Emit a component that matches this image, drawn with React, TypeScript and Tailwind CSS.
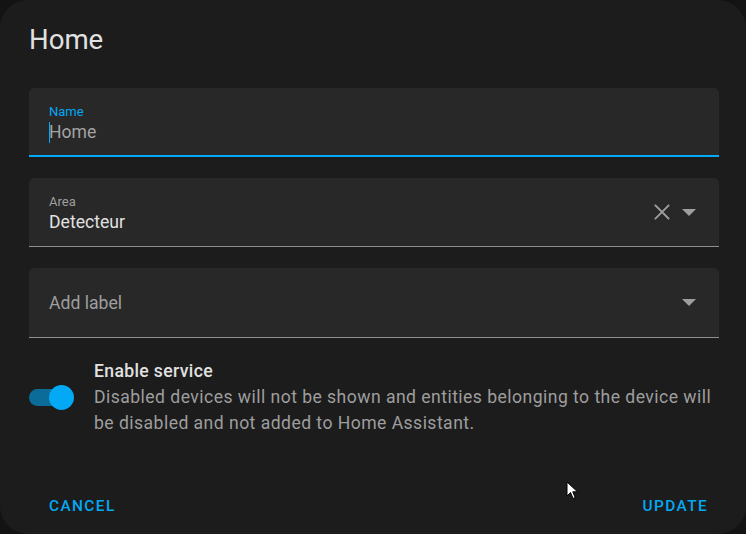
function MenuDown() {
  return (
    <svg width="14" height="7" viewBox="0 0 14 7" className="block">
      <path d="M0 0 L14 0 L7 7 Z" fill="#9e9e9e" />
    </svg>
  );
}

function Clear() {
  return (
    <svg width="16" height="16" viewBox="0 0 16 16" className="block">
      <path d="M1.5 1.5 L14.5 14.5 M14.5 1.5 L1.5 14.5" stroke="#9e9e9e" strokeWidth="1.8" strokeLinecap="square" />
    </svg>
  );
}

function Cursor() {
  return (
    <svg width="13" height="19" viewBox="0 0 13 19" className="absolute left-[566px] top-[481px]">
      <path
        d="M1 1 L1 15 L4.5 11.5 L7 17.5 L9.2 16.6 L6.8 10.8 L11.5 10.8 Z"
        fill="#ffffff"
        stroke="#000000"
        strokeWidth="1"
        strokeLinejoin="round"
      />
    </svg>
  );
}

export default function App() {
  return (
    <div
      className="relative w-[746px] h-[534px] bg-[#131313] overflow-hidden"
      style={{ fontFamily: 'Roboto, "Noto Sans", sans-serif' }}
    >
      <div className="w-full h-full rounded-[28px] bg-[#1c1c1c] pl-[29px] pr-[27px] flex flex-col">
        {/* Title */}
        <div className="h-[88px] pt-[25px]">
          <h2 className="text-[27.6px] leading-[30px] text-[#e1e1e1] font-normal">Home</h2>
        </div>

        {/* Name field (focused) */}
        <div className="h-[69px] rounded-t-[5px] bg-[#282828] border-b-2 border-[#03a9f4] pl-[20px] pt-[16px]">
          <div className="text-[13px] leading-[16px] text-[#03a9f4]">Name</div>
          <div className="flex items-center text-[17.6px] leading-[24px] text-[#a3a3a3]">
            <span className="w-px h-[21px] bg-[#03a9f4] -mr-px" />
            <span>Home</span>
          </div>
        </div>

        {/* Area field */}
        <div className="mt-[21px] h-[69px] rounded-t-[5px] bg-[#282828] border-b border-[#8f8f8f] pl-[20px] pr-[23px] flex items-start">
          <div className="flex-1 pt-[16px]">
            <div className="text-[13px] leading-[16px] text-[#9e9e9e]">Area</div>
            <div className="text-[17.6px] leading-[24px] text-[#e1e1e1]">Detecteur</div>
          </div>
          <div className="flex items-center gap-[12px] h-full">
            <Clear />
            <MenuDown />
          </div>
        </div>

        {/* Label field */}
        <div className="mt-[21px] h-[70px] rounded-t-[5px] bg-[#282828] border-b border-[#8f8f8f] pl-[20px] pr-[23px] flex items-center">
          <div className="flex-1 text-[17.6px] leading-[24px] text-[#9e9e9e]">Add label</div>
          <MenuDown />
        </div>

        {/* Enable switch */}
        <div className="mt-[20px] flex items-center">
          <div className="relative w-[65px] h-[25px] shrink-0">
            <div className="absolute left-0 top-[4px] w-[40px] h-[17px] rounded-full bg-[#0b6c99]" />
            <div className="absolute left-[20px] top-0 w-[25px] h-[25px] rounded-full bg-[#03a9f4]" />
          </div>
          <div className="flex-1">
            <div className="text-[17.6px] leading-[26px] tracking-[0.35px] text-[#e1e1e1] font-medium">Enable service</div>
            <div className="text-[17.6px] leading-[26px] tracking-[0.45px] text-[#9e9e9e]">
              Disabled devices will not be shown and entities belonging to the device will be disabled and not added to Home Assistant.
            </div>
          </div>
        </div>

        {/* Actions */}
        <div className="mt-[60px] flex justify-between pl-[20px] pr-[11px]">
          <button className="text-[15.4px] leading-[20px] font-medium tracking-[1.4px] text-[#03a9f4]">CANCEL</button>
          <button className="text-[15.4px] leading-[20px] font-medium tracking-[1.4px] text-[#03a9f4]">UPDATE</button>
        </div>
      </div>
      <Cursor />
    </div>
  );
}
